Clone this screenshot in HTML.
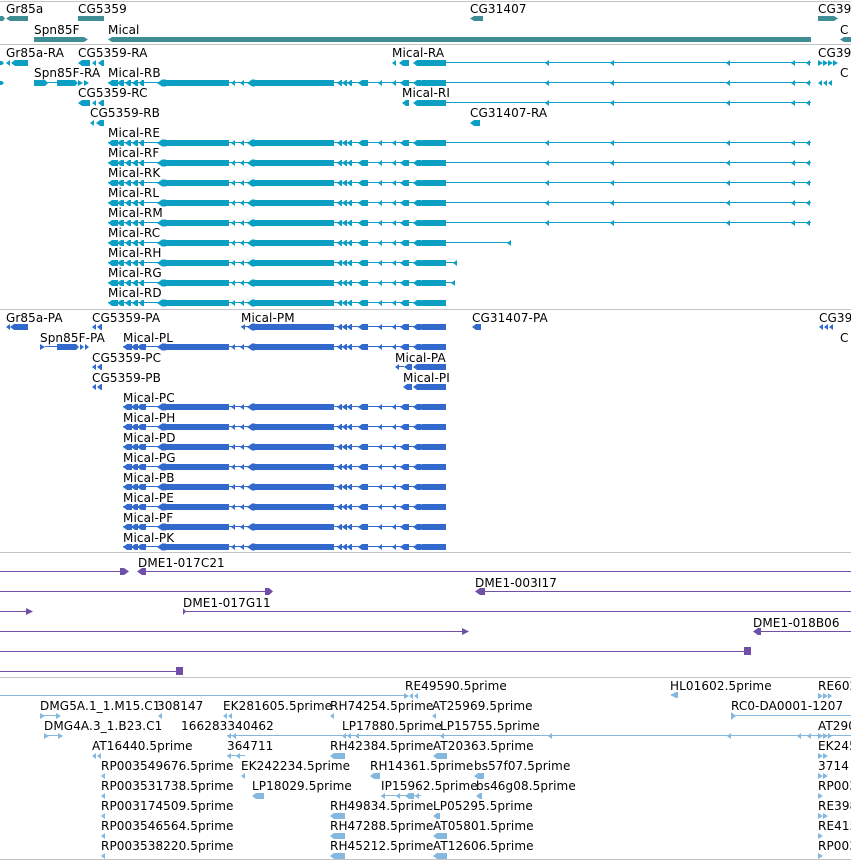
<!DOCTYPE html>
<html><head><meta charset="utf-8"><style>
html,body{margin:0;padding:0;background:#fff;width:851px;height:861px;overflow:hidden}
svg{display:block}
text{font-family:"DejaVu Sans","Liberation Sans",sans-serif;font-size:12px;fill:#000;letter-spacing:0.1px}
</style></head><body>
<svg width="851" height="861" viewBox="0 0 851 861" xmlns="http://www.w3.org/2000/svg" shape-rendering="crispEdges">
<defs>
<g id="mx">
<rect x="108" y="-1" width="338" height="1"/>
<path shape-rendering="auto" d="M108 0L112 -3H118V3H112Z M117 0L121 -3H124V3H121Z M125 0L129 -3H131V3H129Z M132 0L136 -3H138V3H136Z M139 0L142 -3H144V3H142Z M157 0L162 -3.5H166V-3H229V3H166V3.5H162Z M231 0L235 -3V3Z M240 0L244 -3V3Z M247 0L252 -3.5H255V-3H334V3H255V3.5H252Z M337 0L341 -3H342V3H341Z M342 0L346 -3H347V3H346Z M347 0L351 -3H352V3H351Z M358 0L362 -3H368V3H362Z M378 0L382 -3V3Z M392 0L396 -3V3Z M400 0L404 -3H409V3H404Z M413 0L417 -3H421V3H417Z M418 0L422 -3H446V3H422Z"/>
</g>
<g id="pm">
<rect x="123" y="-1" width="323" height="1"/>
<path shape-rendering="auto" d="M123 0L127 -3H132V3H127Z M131 0L135 -3H138V3H135Z M137 0L141 -3H146V3H141Z M157 0L162 -3.5H166V-3H229V3H166V3.5H162Z M231 0L235 -3V3Z M240 0L244 -3V3Z M247 0L252 -3.5H255V-3H334V3H255V3.5H252Z M337 0L341 -3H342V3H341Z M342 0L346 -3H347V3H346Z M347 0L351 -3H352V3H351Z M358 0L362 -3H368V3H362Z M378 0L382 -3V3Z M392 0L396 -3V3Z M400 0L404 -3H409V3H404Z M413 0L417 -3H421V3H417Z M418 0L422 -3H446V3H422Z"/>
</g>
<g id="tail">
<rect x="446" y="-1" width="365" height="1"/>
<path shape-rendering="auto" d="M545 0L549 -3V3Z M610 0L614 -3V3Z M726 0L730 -3V3Z M791 0L795 -3V3Z M806 0L810 -3V3Z"/>
</g>
</defs>

<g fill="#c4c4c4">
<rect x="0" y="1" width="851" height="1"/>
<rect x="0" y="44" width="851" height="1"/>
<rect x="0" y="309" width="851" height="1"/>
<rect x="0" y="552" width="851" height="1"/>
<rect x="0" y="677" width="851" height="1"/>
<rect x="0" y="859" width="851" height="1"/>
</g>

<g fill="#3f8e96" shape-rendering="auto">
<path d="M0 16H3L5 18.5L3 21H0Z"/>
<path d="M6 18.5L10 16H28V21H10Z"/>
<path d="M78 16H104V21H78Z"/>
<path d="M470 18.5L474 16H483V21H474Z"/>
<path d="M818 16H834L838 18.5L834 21H818Z"/>
<path d="M34 37H84L88 39.5L84 42H34Z"/>
<path d="M108 39.5L112 37H811V42H112Z"/>
<path d="M840 39.5L844 37H851V42H844Z"/>
</g>
<text x="6" y="13">Gr85a</text>
<text x="78" y="13">CG5359</text>
<text x="470" y="13">CG31407</text>
<text x="818" y="13">CG39</text>
<text x="34" y="34">Spn85F</text>
<text x="108" y="34">Mical</text>
<text x="840" y="34">C</text>

<g fill="#0a9fc3">
<g shape-rendering="auto">
<path d="M0 61H2L4 63L2 65H0Z"/>
<path d="M6 63L10 60V66Z M11 63L15 60H28V66H15Z"/>
<path d="M78 63L82 60H90V66H82Z M92 63L96 60V66Z M98 63L102 60H104V66H102Z"/>
<path d="M392 63L396 60V66Z M399 63L403 60H409V66H403Z M413 63L417 60H446V66H417Z"/>
<path d="M818 60L823 63L818 66Z M823 60L828 63L823 66Z M828 60L833 63L828 66Z M833 60L838 63L833 66Z"/>
<path d="M0 81H2L4 83L2 85H0Z"/>
<path d="M34 80H45L48 83L45 86H34Z M57 80H75L78 83L75 86H57Z M78 80L83 83L78 86Z M84 80L89 83L84 86Z"/>
<path d="M818 83L822 80V86Z M823 83L827 80V86Z M828 83L832 80V86Z"/>
<path d="M78 103L82 100H90V106H82Z M92 103L96 100V106Z M98 103L102 100H104V106H102Z"/>
<path d="M402 103L406 100H409V106H406Z M413 103L417 100H446V106H417Z"/>
<path d="M90 123L94 120V126Z M96 123L100 120H104V126H100Z"/>
<path d="M470 123L474 120H480V126H474Z"/>
<path d="M507 243L511 240V246Z"/>
<path d="M453 263L457 260V266Z"/>
<path d="M451 283L455 280V286Z"/>
</g>
<rect x="45" y="82" width="12" height="1"/>
<use href="#tail" y="63"/>
<use href="#mx" y="83"/><use href="#tail" y="83"/>
<use href="#tail" y="103"/>
<use href="#mx" y="143"/><use href="#tail" y="143"/>
<use href="#mx" y="163"/><use href="#tail" y="163"/>
<use href="#mx" y="183"/><use href="#tail" y="183"/>
<use href="#mx" y="203"/><use href="#tail" y="203"/>
<use href="#mx" y="223"/><use href="#tail" y="223"/>
<use href="#mx" y="243"/><rect x="446" y="242" width="65" height="1"/>
<use href="#mx" y="263"/><rect x="446" y="262" width="10" height="1"/>
<use href="#mx" y="283"/><rect x="446" y="282" width="9" height="1"/>
<use href="#mx" y="303"/>
</g>
<text x="6" y="57">Gr85a-RA</text>
<text x="78" y="57">CG5359-RA</text>
<text x="392" y="57">Mical-RA</text>
<text x="818" y="57">CG39</text>
<text x="34" y="77">Spn85F-RA</text>
<text x="108" y="77">Mical-RB</text>
<text x="840" y="77">C</text>
<text x="78" y="97">CG5359-RC</text>
<text x="402" y="97">Mical-RI</text>
<text x="90" y="117">CG5359-RB</text>
<text x="470" y="117">CG31407-RA</text>
<text x="108" y="137">Mical-RE</text>
<text x="108" y="157">Mical-RF</text>
<text x="108" y="177">Mical-RK</text>
<text x="108" y="197">Mical-RL</text>
<text x="108" y="217">Mical-RM</text>
<text x="108" y="237">Mical-RC</text>
<text x="108" y="257">Mical-RH</text>
<text x="108" y="277">Mical-RG</text>
<text x="108" y="297">Mical-RD</text>

<g fill="#3169cc">
<rect x="241" y="326" width="205" height="1"/>
<rect x="45" y="346" width="12" height="1"/>
<rect x="399" y="366" width="5" height="1"/>
<g shape-rendering="auto">
<path d="M6 327L10 324V330Z M10 327L14 324H28V330H14Z"/>
<path d="M92 327L96 324V330Z M97 327L101 324H102V330H101Z"/>
<path d="M241 327L245 324V330Z M247 327L252 323.5H255V324H334V330H255V330.5H252Z M337 327L341 324H342V330H341Z M342 327L346 324H347V330H346Z M347 327L351 324H352V330H351Z M358 327L362 324H368V330H362Z M378 327L382 324V330Z M392 327L396 324V330Z M400 327L404 324H409V330H404Z M413 327L417 324H421V330H417Z M418 327L422 324H446V330H422Z"/>
<path d="M472 327L476 324H481V330H476Z"/>
<path d="M819 327L823 324V330Z M824 327L828 324V330Z M829 327L833 324V330Z"/>
<path d="M40 344L45 347L40 350Z M57 344H76L79 347L76 350H57Z M80 344L84 347L80 350Z M85 344L89 347L85 350Z"/>
<path d="M92 367L96 364V370Z M97 367L101 364H102V370H101Z"/>
<path d="M395 367L399 364V370Z M404 367L408 364H412V370H408Z M413 367L417 364H446V370H417Z"/>
<path d="M92 387L96 384V390Z M97 387L101 384H102V390H101Z"/>
<path d="M403 387L407 384H412V390H407Z M413 387L417 384H446V390H417Z"/>
</g>
<use href="#pm" y="347"/>
<use href="#pm" y="407"/>
<use href="#pm" y="427"/>
<use href="#pm" y="447"/>
<use href="#pm" y="467"/>
<use href="#pm" y="487"/>
<use href="#pm" y="507"/>
<use href="#pm" y="527"/>
<use href="#pm" y="547"/>
</g>
<text x="6" y="322">Gr85a-PA</text>
<text x="92" y="322">CG5359-PA</text>
<text x="241" y="322">Mical-PM</text>
<text x="472" y="322">CG31407-PA</text>
<text x="819" y="322">CG39</text>
<text x="40" y="342">Spn85F-PA</text>
<text x="123" y="342">Mical-PL</text>
<text x="840" y="342">C</text>
<text x="92" y="362">CG5359-PC</text>
<text x="395" y="362">Mical-PA</text>
<text x="92" y="382">CG5359-PB</text>
<text x="403" y="382">Mical-PI</text>
<text x="123" y="402">Mical-PC</text>
<text x="123" y="422">Mical-PH</text>
<text x="123" y="442">Mical-PD</text>
<text x="123" y="462">Mical-PG</text>
<text x="123" y="482">Mical-PB</text>
<text x="123" y="502">Mical-PE</text>
<text x="123" y="522">Mical-PF</text>
<text x="123" y="542">Mical-PK</text>

<g fill="#6f4fa8">
<rect x="0" y="571" width="125" height="1"/>
<rect x="140" y="571" width="711" height="1"/>
<rect x="0" y="591" width="270" height="1"/>
<rect x="478" y="591" width="373" height="1"/>
<rect x="0" y="611" width="30" height="1"/>
<rect x="183" y="611" width="668" height="1"/>
<rect x="0" y="631" width="466" height="1"/>
<rect x="756" y="631" width="95" height="1"/>
<rect x="0" y="651" width="748" height="1"/>
<rect x="0" y="671" width="180" height="1"/>
<g shape-rendering="auto">
<path d="M120 568H124L129 571.5L124 575H120Z"/>
<path d="M137 571.5L142 568H146V575H142Z"/>
<path d="M265 588H269L273 591.5L269 595H265Z"/>
<path d="M475 591.5L480 588H485V595H480Z"/>
<path d="M26 608L33 611.5L26 615Z"/>
<path d="M183 608L186 611.5L183 615Z"/>
<path d="M462 628L469 631.5L462 635Z"/>
<path d="M753 631.5L758 628H761V635H758Z"/>
<path d="M744 647H751V655H744Z"/>
<path d="M176 667L183 667V675L176 675Z"/>
</g>
</g>
<text x="138" y="567">DME1-017C21</text>
<text x="475" y="587">DME1-003I17</text>
<text x="183" y="607">DME1-017G11</text>
<text x="753" y="627">DME1-018B06</text>

<g fill="#84b8de">
<rect x="0" y="695" width="404" height="1"/>
<rect x="40" y="715" width="16" height="1"/>
<rect x="731" y="715" width="120" height="1"/>
<rect x="44" y="735" width="16" height="1"/>
<rect x="227" y="735" width="624" height="1"/>
<rect x="227" y="755" width="18" height="1"/>
<rect x="381" y="795" width="40" height="1"/>
<g shape-rendering="auto">
<path d="M404 693L409 696L404 699Z M409 696L413 693V699Z M414 696L418 693V699Z"/>
<path d="M670 695L676 692H678V698H676Z"/>
<path d="M818 693L823 696L818 699Z M823 693L828 696L823 699Z M828 693L832 696L828 699Z"/>
<path d="M40 713L45 716L40 719Z M56 713L61 716L56 719Z"/>
<path d="M158 716L162 713V719Z"/>
<path d="M223 716L227 713V719Z M228 716L232 713V719Z"/>
<path d="M330 716L334 713V719Z"/>
<path d="M432 716L436 713V719Z"/>
<path d="M731 712L736 716L731 720Z"/>
<path d="M44 733L49 736L44 739Z M58 733L63 736L58 739Z"/>
<path d="M227 736L231 733V739Z M232 736L236 733V739Z M342 736L346 733V739Z M347 736L351 733V739Z M355 736L359 733V739Z M440 736L444 733V739Z M548 736L552 733V739Z M727 736L731 733V739Z M797 736L801 733V739Z M807 736L811 733V739Z"/>
<path d="M818 733L823 736L818 739Z M823 733L828 736L823 739Z M828 733L832 736L828 739Z"/>
<path d="M92 756L96 753V759Z M97 756L101 753V759Z"/>
<path d="M227 756L231 753V759Z M236 756L240 753V759Z"/>
<path d="M330 756L334 753H345V759H334Z"/>
<path d="M433 756L437 753H447V759H437Z"/>
<path d="M818 753L823 756L818 759Z M823 753L828 756L823 759Z"/>
<path d="M101 776L105 773V779Z"/>
<path d="M241 776L245 773V779Z"/>
<path d="M370 776L374 773H380V779H374Z"/>
<path d="M474 776L478 773H484V779H478Z"/>
<path d="M818 773L823 776L818 779Z M823 773L828 776L823 779Z"/>
<path d="M101 796L105 793V799Z"/>
<path d="M252 796L256 793H264V799H256Z"/>
<path d="M381 796L385 793V799Z M396 796L400 793V799Z M405 796L409 793H414V799H409Z M415 796L419 793V799Z"/>
<path d="M476 796L480 793H482V799H480Z"/>
<path d="M818 793L823 796L818 799Z"/>
<path d="M101 816L105 813V819Z"/>
<path d="M330 816L334 813H345V819H334Z"/>
<path d="M433 816L437 813H440V819H437Z"/>
<path d="M818 813L823 816L818 819Z M823 813L828 816L823 819Z"/>
<path d="M101 836L105 833V839Z"/>
<path d="M330 836L334 833H345V839H334Z"/>
<path d="M433 836L437 833H447V839H437Z"/>
<path d="M818 833L823 836L818 839Z"/>
<path d="M101 856L105 853V859Z"/>
<path d="M330 856L334 853H345V859H334Z"/>
<path d="M433 856L437 853H447V859H437Z"/>
<path d="M818 853L823 856L818 859Z"/>
</g>
</g>
<text x="405" y="690">RE49590.5prime</text>
<text x="670" y="690">HL01602.5prime</text>
<text x="818" y="690">RE602</text>
<text x="40" y="710">DMG5A.1_1.M15.C1</text>
<text x="157" y="710">308147</text>
<text x="223" y="710">EK281605.5prime</text>
<text x="330" y="710">RH74254.5prime</text>
<text x="432" y="710">AT25969.5prime</text>
<text x="731" y="710">RC0-DA0001-1207</text>
<text x="44" y="730">DMG4A.3_1.B23.C1</text>
<text x="181" y="730">166283340462</text>
<text x="342" y="730">LP17880.5prime</text>
<text x="440" y="730">LP15755.5prime</text>
<text x="818" y="730">AT290</text>
<text x="92" y="750">AT16440.5prime</text>
<text x="227" y="750">364711</text>
<text x="330" y="750">RH42384.5prime</text>
<text x="433" y="750">AT20363.5prime</text>
<text x="818" y="750">EK245</text>
<text x="101" y="770">RP003549676.5prime</text>
<text x="241" y="770">EK242234.5prime</text>
<text x="370" y="770">RH14361.5prime</text>
<text x="474" y="770">bs57f07.5prime</text>
<text x="818" y="770">3714</text>
<text x="101" y="790">RP003531738.5prime</text>
<text x="252" y="790">LP18029.5prime</text>
<text x="381" y="790">IP15962.5prime</text>
<text x="476" y="790">bs46g08.5prime</text>
<text x="818" y="790">RP003</text>
<text x="101" y="810">RP003174509.5prime</text>
<text x="330" y="810">RH49834.5prime</text>
<text x="433" y="810">LP05295.5prime</text>
<text x="818" y="810">RE398</text>
<text x="101" y="830">RP003546564.5prime</text>
<text x="330" y="830">RH47288.5prime</text>
<text x="433" y="830">AT05801.5prime</text>
<text x="818" y="830">RE413</text>
<text x="101" y="850">RP003538220.5prime</text>
<text x="330" y="850">RH45212.5prime</text>
<text x="433" y="850">AT12606.5prime</text>
<text x="818" y="850">RP003</text>
</svg>
</body></html>
